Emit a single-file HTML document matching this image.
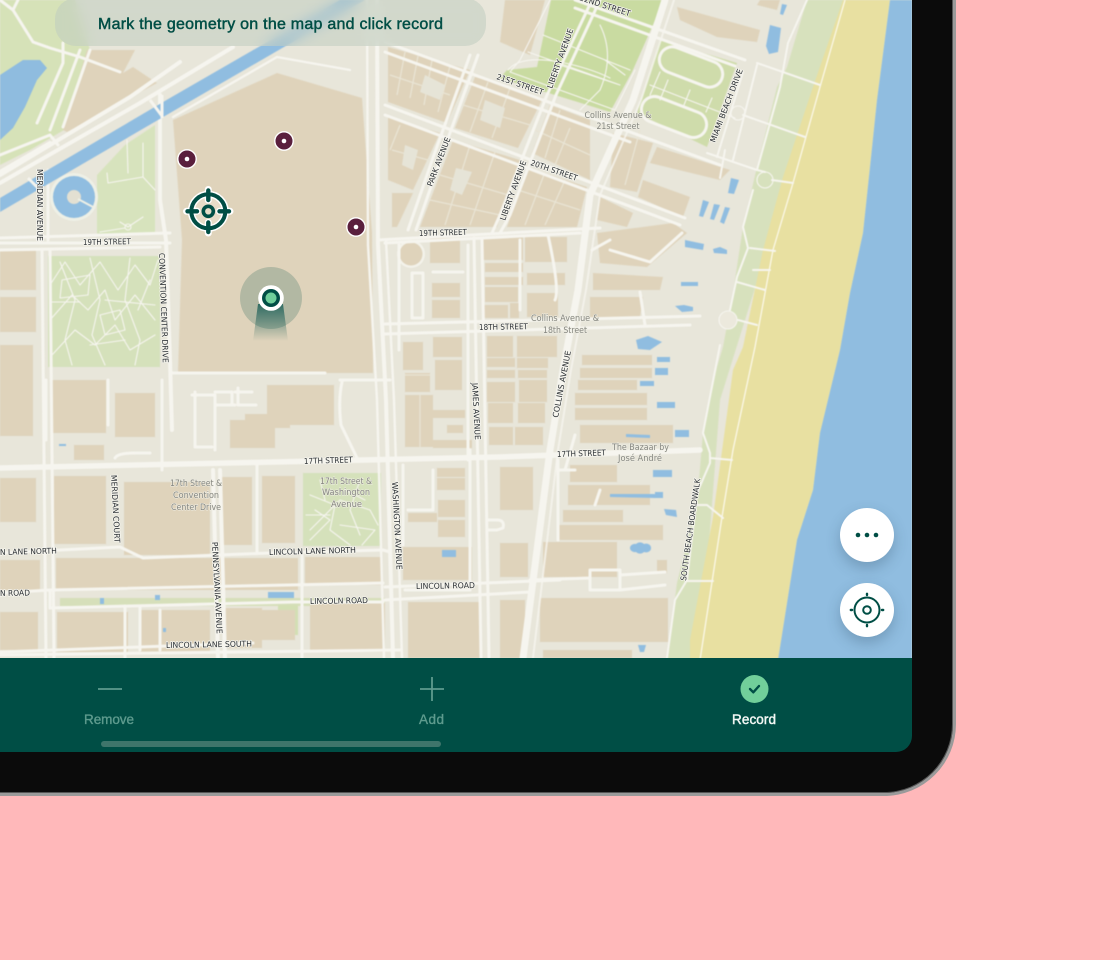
<!DOCTYPE html>
<html lang="en"><head><meta charset="utf-8"><title>Map</title>
<style>
html,body{margin:0;padding:0;width:1120px;height:960px;overflow:hidden;background:#ffb8ba;font-family:"Liberation Sans",sans-serif}
#dev{position:absolute;left:-200px;top:-200px;width:1151px;height:991px;background:#0b0b0b;border:2px solid #9a9a9a;border-right-width:3px;border-bottom-width:3px;border-radius:72px;box-shadow:inset 0 0 0 1px #555}
#scr{position:absolute;left:-100px;top:-100px;width:1012px;height:852px;border-radius:16px;overflow:hidden;background:#004e45}
#map{position:absolute;left:100px;top:100px}
#ban{position:absolute;left:155px;top:98px;width:431px;height:48px;border-radius:21px;background:rgba(192,204,192,.55);backdrop-filter:blur(6px)}
.fab{position:absolute;left:940px;width:54px;height:54px;border-radius:50%;background:#fff;box-shadow:0 6px 14px rgba(40,70,90,.28)}
.t{font-family:"DejaVu Sans",sans-serif;font-size:8px;fill:#2a2f33;stroke:#f6f5ee;stroke-width:1.6px;paint-order:stroke;stroke-linejoin:round}
.g{font-family:"DejaVu Sans",sans-serif;font-size:8.5px;fill:#85867f;stroke:#efeee5;stroke-width:1px;paint-order:stroke}
</style></head><body>
<div id="dev"></div>
<div id="scr">
<svg id="map" width="912" height="658" viewBox="0 0 912 658" xmlns="http://www.w3.org/2000/svg">
<rect width="912" height="658" fill="#e8e6da"/>
<g style="filter:blur(.4px)">
<!-- beach -->
<path d="M807 0L787 67L777 87L757 167L743 227L733 293L723 347L717 367L703 433L697 503L677 583L667 660H700L720 400L845 0Z" fill="#d7e1bd"/>
<path d="M843 0L813 87L783 177L763 250L743 347L733 370L713 517L690 640V660H778L797 540L813 490L820 433L840 350L850 293L863 233L870 167L877 100L890 0Z" fill="#e8e0a1"/>
<path d="M890 0L877 100L870 167L863 233L850 293L840 350L820 433L813 490L797 540L778 660H912V0Z" fill="#90bde0"/>
<path d="M845 0L820 87L793 183L773 250L755 347L733 450L722 517L700 660" fill="none" stroke="#fbf8e8" stroke-width="1.3"/>
<!-- parks -->
<path d="M0 0H75L90 50L64 130L30 150L0 165Z" fill="#d6e2b8"/>
<path d="M0 75L23 60L40 60L47 68L37 80L25 107L13 128L0 140Z" fill="#8fbcdf"/>
<path d="M97 235V175L125 145L155 125V235Z" fill="#d7e3bd"/>
<circle cx="74" cy="197" r="24" fill="#eef0e6"/><circle cx="74" cy="197" r="21" fill="#90bde0"/><circle cx="74" cy="197" r="7" fill="#e3e0d2"/>
<path d="M78 199L93 207" stroke="#eef0e6" stroke-width="2"/>
<rect x="48" y="256" width="112" height="111" fill="#d5e1bb"/>
<rect x="303" y="473" width="78" height="73" fill="#d5e1bb"/>
<path d="M551 0L537 67L507 70L500 78L610 112L632 72L664 0Z" fill="#c9dba1"/>
<path d="M660 40L737 63L707 147L637 113Z" fill="#cfdcab"/>
<path d="M60 598H385V606H60Z" fill="#d6dfba"/><path d="M278 605H298V635H278Z" fill="#d3dfb4"/>
<!-- buildings -->
<path fill="#dfd3bb" d="M173 120L277 73L362 98L372 233L373 373L178 373L182 240Z
M63 130L87 50H135L123 73L133 67L157 83L67 132Z
M388 47L470 70L447 123L388 102Z M475 77L543 98L518 148L455 128Z M550 105L590 120L590 180L532 153Z
M388 117L440 133L413 190L388 180Z M392 193H413L397 227H392Z M453 140L520 160L497 227H420Z M527 167L587 187L577 227H507Z
M505 0H545L530 55L500 42Z
M613 133L653 143L637 192L610 187Z M657 147L730 170L720 180L650 163Z M643 180L690 197L683 217L638 197Z M600 197L633 213L627 227L597 220Z
M597 233L673 223L687 233L647 267L600 263Z M593 273L663 277L660 290L593 290Z M590 297H643L640 317L590 320Z
M677 7L760 30L757 42L717 37L680 20Z M760 0H780L777 10L757 5Z
M0 250H36V290H0ZM0 297H36V332H0ZM0 345H33V436H0ZM0 478H36V522H0ZM0 560H40V590H0ZM0 612H38V650H0Z
M52 380H106V433H52Z M115 393H155V437H115Z M74 445H104V460H74Z M54 476H106V544H54Z M124 482H210V555H124Z M222 477H252V545H222Z M262 476H295V543H262Z
M56 558H298V590H56ZM305 557H382V585H305Z M57 612H128V652H57ZM140 610H210V652H140ZM225 608H262V648H225ZM262 610H295V640H262ZM310 603H385V652H310Z
M267 385H334V425H267Z M245 414H290V428H245Z M230 420H275V448H230Z
M430 238H460V263H430ZM432 283H460V297H432ZM432 300H460V318H432Z
M403 342H423V370H403ZM433 337H462V357H433ZM435 360H462V390H435ZM405 373H430V392H405ZM405 395H433V447H405ZM433 410H465V418H433ZM447 425H463V433H447ZM433 440H472V448H433Z
M483 237H523V260H483ZM525 237H567V262H525ZM485 263H523V272H485ZM485 277H523V285H485ZM527 273H565V285H527ZM485 287H518V302H485ZM484 305H508V318H484ZM510 303H519V318H510ZM527 293H558V317H527Z
M487 336H513V357H487ZM517 336H557V357H517ZM487 358H515V367H487ZM517 358H548V368H517ZM487 370H515V378H487ZM518 370H547V378H518ZM487 382H515V402H487ZM519 380H547V402H519ZM488 403H513V423H488ZM518 403H545V423H518ZM489 427H513V445H489ZM515 427H543V445H515Z
M582 355H652V365H582ZM580 368H652V378H580ZM578 380H637V390H578ZM575 393H647V405H575ZM575 408H647V420H575ZM580 425H673V443H580ZM570 465H617V482H570ZM568 485H650V505H568ZM563 510H623V522H563ZM557 525H663V540H557ZM543 542H617V577H543ZM657 560H667V573H657ZM540 598H668V642H540ZM543 650H632V658H543Z
M500 467H533V510H500ZM500 543H528V577H500ZM500 600H525V658H500Z
M437 468H465V477H437ZM437 478H465V490H437ZM438 500H465V517H438ZM408 513H437V522H408ZM438 520H465V537H438ZM403 547H472V580H403ZM408 602H480V658H408Z"/>
<circle cx="411" cy="254" r="14" fill="#f3f2ea"/><circle cx="411" cy="254" r="11.500" fill="#dfd3bb"/>
<!-- gaps in blocks -->
<g stroke="#e9e4d4" stroke-width="1.300" fill="none">
<path d="M405 52L397 95M418 56L410 98M432 60L424 105M390 75L450 95M450 66L438 112M488 82L470 132M510 88L492 138M463 105L530 125M560 110L545 158M535 130L590 155M570 128L555 165"/>
<path d="M392 150L428 160M400 125L390 150M470 145L445 225M495 152L470 225M440 175L508 195M430 200L500 215M545 172L525 225M565 180L545 225M518 190L580 210"/>
<path d="M640 130L625 185M405 375H430M420 395V447"/>
</g>
<path fill="#e6e4d7" d="M425 75L445 85L440 100L420 92Z M485 100L505 108L500 128L480 120Z M405 145L418 150L413 170L402 165Z M456 168L472 172L462 195L450 190Z"/>
<!-- pools -->
<path fill="#90bde0" d="M770 25L781 28L778 52L769 54L766 46ZM782 4L787 5L783 15L780 14ZM731 178L739 180L734 194L728 193ZM703 200L709 202L703 217L699 216ZM714 204L720 205L714 220L710 219ZM725 207L730 208L724 224L720 222ZM685 240L704 244L703 250L685 247ZM713 249L720 247L727 250V254L714 253ZM681 282H698V286H681ZM675 306L684 305L693 307V311L682 312ZM636 340L648 336L662 342L650 350L638 349ZM657 357H670V362H657ZM655 368H668V375H655ZM640 381H654V386H640ZM657 402H675V408H657ZM626 434L650 435V438L626 437ZM675 430H689V437H675ZM653 470H672V477H653ZM610 494L655 494V498L610 497ZM655 492H663V498H655ZM664 509L676 510L677 517L666 515ZM638 645H646L644 652H640ZM442 550H456V557H442ZM268 592H294V598H268ZM59 444H66V446H59ZM100 598H104V604H100ZM155 595H160V600H155ZM163 628H166V632H163Z"/>
<path fill="#90bde0" d="M630 548a5 4 0 0 1 6-4a5 4 0 0 1 8 0a5 4 0 0 1 7 4a5 4 0 0 1-7 4a5 4 0 0 1-8 0a5 4 0 0 1-6-4Z"/>
<!-- roads -->
<g fill="none" stroke="#f6f5ef" stroke-linecap="round" stroke-linejoin="round">
<g stroke-width="3">
<path d="M13 10L33 42L50 48L80 57L120 72"/><path d="M0 0L13 10M18 0L13 10"/>
<path d="M63 43V63L37 123"/>
<path d="M80 50L50 130M90 50L63 127"/>
<path d="M0 155L50 135L58 145"/>
<path d="M40 170V240M48 170V240M42 250L46 658M50 250L54 658"/>
<path d="M0 238L170 233M0 250L160 247"/>
<path d="M46 380V440M172 373H325"/>
<path d="M162 380V470"/>
<path d="M192 395H215V450M215 392H232V405M238 388V405H256M235 392H252M215 405H235"/>
<path d="M195 392V447H212"/>
<path d="M340 380H390M342 382Q338 400 341 425L358 460"/>
<path d="M108 380V425"/>
<path d="M115 458Q118 453 135 453H150"/>
<path d="M257 465V552M302 555V658"/>
<path d="M0 553L120 547L143 558L270 553L383 550L390 552"/>
<path d="M0 593L50 590L383 583M50 608L293 602L383 602"/>
<path d="M0 652L253 643M0 655L400 650"/>
<path d="M385 587L560 580M385 600L530 592"/>
<path d="M50 590V608M125 606V658M160 610V650M140 606V650"/>
<path d="M378 240L600 228M385 243L580 233"/>
<path d="M385 324L700 316M385 334L690 325"/>
<path d="M474 238L481 658M482 238L489 658"/>
<path d="M385 42L720 165M385 52L630 142"/>
<path d="M385 105L685 218M385 115L680 225"/>
<path d="M575 0L745 60M575 8L735 66"/>
<path d="M592 0L547 95L500 215L492 233M600 0L556 95L510 215L500 233"/>
<path d="M470 55L434 155L408 230M478 55L442 155L416 230"/>
<path d="M399 245V350M468 245V460"/>
<path d="M433 272H463M412 273H423V318H412Z"/>
<path d="M403 465V545M433 470V510H408M470 450V590"/>
<path d="M408 510H432M405 590H470"/>
<path d="M487 520H497Q505 520 503 528L497 530H487"/>
<path d="M548 235Q560 290 555 300M592 250L610 240"/>
<path d="M520 240V310M575 435L565 470"/>
<path d="M560 470H575M558 460V540"/>
<path d="M530 580L590 578M590 570H620V590H590ZM620 575L665 572M620 590L665 585"/>
<path d="M640 292L645 325"/>
<path d="M595 505L600 490M610 250L650 262L682 233"/>
</g>
<g stroke-width="2">
<path d="M707 153L757 170L765 172M753 190L743 227L748 248L737 277L730 310M720 345L703 433L710 453L710 463L697 493L687 580L675 600L667 658"/>
<path d="M717 157L743 72M733 160L757 65M757 170L780 87L788 43L807 0"/>
<path d="M757 63L820 85M743 115L805 137M772 180L793 183M750 248L775 251M753 270L770 270M737 282L765 290M738 320L757 325M710 458L732 460M697 505H707L723 518M687 581H713"/>
<path d="M725 150L720 178"/>
</g>
<!-- thick -->
<g stroke-width="4">
<path d="M0 183L140 103L233 47M0 175L130 97L180 62"/>
<path d="M50 143L0 172"/>
<path d="M160 95V200L166 240L170 360L172 430"/>
<path d="M377 0L378 245L386 400L393 658"/>
<path d="M0 468L500 457L700 450" stroke-width="5.500"/>
<path d="M213 470L218 658M220 470L225 658"/>
<path d="M0 243H170" stroke-width="3"/>
</g>
<g stroke-width="2.400">
<path d="M367 0L368 245L377 400L384 658"/>
<path d="M386 240L394 400L402 658"/>
<path d="M173 117L277 57L350 70"/>
</g>
<path d="M665 0L633 100L590 195L578 290L563 370L550 450L523 658" stroke-width="7"/>
<path d="M674 0L641 100L600 195L586 290L571 370L558 450L533 658" stroke-width="2" opacity=".8"/>
<!-- ovals -->
<g stroke-width="3" fill="none">
<rect x="658" y="54" width="66" height="26" rx="13" transform="rotate(21 691 67)"/>
<rect x="640" y="104" width="68" height="26" rx="13" transform="rotate(21 674 117)"/>
</g>
<g stroke-width="1.100">
<path d="M650 85L735 118M660 72L650 95M668 80L660 100M690 90L684 105M712 98L706 112"/>
<path d="M550 0L520 60L510 72L615 110L635 70M543 35L630 70M508 70Q520 55 560 62Q590 68 610 78M600 25Q615 55 600 90L580 110M528 52L620 85M560 65L620 85M605 60L625 75"/>
<circle cx="765" cy="180" r="8"/><circle cx="738" cy="113" r="7"/><circle cx="728" cy="320" r="9" fill="#ece9dd"/>
<path d="M50 285L65 262L80 285L100 262L118 290L135 265L150 285L158 260M50 320L72 295L88 310L105 290L115 320L135 295L155 320M52 355L75 330L95 345L115 325L130 350L155 335M60 262L75 300L65 340L72 365M90 258L100 300L92 335L105 365M130 258L125 300L140 340L135 365M52 302H80M105 300L155 305M90 345L125 340M150 280L138 310M62 280L90 275L88 295L60 298ZM100 315L120 310L125 330L105 335Z"/>
<path d="M310 495L335 505L330 530L350 545M310 530L340 500L370 510L378 525M360 480L350 510L360 535M315 510L330 520L310 540M345 490L365 500M320 480L325 500M306 515H330M340 525L375 530L362 545"/>
<path d="M107 173L108 183L143 177L155 190M127 140L128 173M143 143V177M120 222L128 227L143 217M100 232L125 228"/><circle cx="128" cy="227" r="3"/>
</g>
</g>
<!-- canal -->
<path d="M0 198L170 98L340 0H365L170 113L0 212Z" fill="#90bde0"/>
<path d="M150 100L162 116M162 95V118M28 178L40 190" stroke="#f6f5ef" stroke-width="3" fill="none"/>
</g>
<!-- labels -->
<g>
<text class="t" x="83" y="245" lengthAdjust="spacingAndGlyphs" textLength="48" transform="rotate(-1 83 245)">19TH STREET</text>
<text class="t" x="419" y="236" lengthAdjust="spacingAndGlyphs" textLength="48" transform="rotate(-1.5 419 236)">19TH STREET</text>
<text class="t" x="479" y="330" lengthAdjust="spacingAndGlyphs" textLength="49" transform="rotate(-1 479 330)">18TH STREET</text>
<text class="t" x="304" y="464" lengthAdjust="spacingAndGlyphs" textLength="49" transform="rotate(-2 304 464)">17TH STREET</text>
<text class="t" x="557" y="457" lengthAdjust="spacingAndGlyphs" textLength="49" transform="rotate(-2 557 457)">17TH STREET</text>
<text class="t" x="37" y="169" lengthAdjust="spacingAndGlyphs" textLength="72" transform="rotate(90 37 169)">MERIDIAN AVENUE</text>
<text class="t" x="159" y="253" lengthAdjust="spacingAndGlyphs" textLength="110" transform="rotate(88 159 253)">CONVENTION CENTER DRIVE</text>
<text class="t" x="111" y="475" lengthAdjust="spacingAndGlyphs" textLength="68" transform="rotate(87 111 475)">MERIDIAN COURT</text>
<text class="t" x="212" y="542" lengthAdjust="spacingAndGlyphs" textLength="92" transform="rotate(87 212 542)">PENNSYLVANIA AVENUE</text>
<text class="t" x="392" y="482" lengthAdjust="spacingAndGlyphs" textLength="88" transform="rotate(87 392 482)">WASHINGTON AVENUE</text>
<text class="t" x="472" y="383" lengthAdjust="spacingAndGlyphs" textLength="57" transform="rotate(87 472 383)">JAMES AVENUE</text>
<text class="t" x="558" y="418" lengthAdjust="spacingAndGlyphs" textLength="68" transform="rotate(-79 558 418)">COLLINS AVENUE</text>
<text class="t" x="432" y="187" lengthAdjust="spacingAndGlyphs" textLength="52" transform="rotate(-69 432 187)">PARK AVENUE</text>
<text class="t" x="552" y="89" lengthAdjust="spacingAndGlyphs" textLength="63" transform="rotate(-70 552 89)">LIBERTY AVENUE</text>
<text class="t" x="505" y="221" lengthAdjust="spacingAndGlyphs" textLength="63" transform="rotate(-70 505 221)">LIBERTY AVENUE</text>
<text class="t" x="579" y="0" lengthAdjust="spacingAndGlyphs" textLength="53" transform="rotate(18 579 0)">22ND STREET</text>
<text class="t" x="496" y="79" lengthAdjust="spacingAndGlyphs" textLength="49" transform="rotate(19 496 79)">21ST STREET</text>
<text class="t" x="530" y="165" lengthAdjust="spacingAndGlyphs" textLength="49" transform="rotate(19 530 165)">20TH STREET</text>
<text class="t" x="715" y="143" lengthAdjust="spacingAndGlyphs" textLength="78" transform="rotate(-69 715 143)">MIAMI BEACH DRIVE</text>
<text class="t" x="686" y="581" lengthAdjust="spacingAndGlyphs" textLength="103" transform="rotate(-82 686 581)">SOUTH BEACH BOARDWALK</text>
<text class="t" x="269" y="555" lengthAdjust="spacingAndGlyphs" textLength="87" transform="rotate(-1.5 269 555)">LINCOLN LANE NORTH</text>
<text class="t" x="0" y="555" lengthAdjust="spacingAndGlyphs" textLength="57" transform="rotate(-1.5 0 555)">N LANE NORTH</text>
<text class="t" x="416" y="589" lengthAdjust="spacingAndGlyphs" textLength="59" transform="rotate(-1 416 589)">LINCOLN ROAD</text>
<text class="t" x="310" y="604" lengthAdjust="spacingAndGlyphs" textLength="58" transform="rotate(-1 310 604)">LINCOLN ROAD</text>
<text class="t" x="0" y="596" lengthAdjust="spacingAndGlyphs" textLength="30" transform="rotate(-1 0 596)">N ROAD</text>
<text class="t" x="166" y="648" lengthAdjust="spacingAndGlyphs" textLength="86" transform="rotate(-1 166 648)">LINCOLN LANE SOUTH</text>
<text class="g" x="584.500" y="118" lengthAdjust="spacingAndGlyphs" textLength="67">Collins Avenue &amp;</text><text class="g" x="596.500" y="129" lengthAdjust="spacingAndGlyphs" textLength="43">21st Street</text>
<text class="g" x="531" y="321" lengthAdjust="spacingAndGlyphs" textLength="68">Collins Avenue &amp;</text><text class="g" x="543" y="333" lengthAdjust="spacingAndGlyphs" textLength="44">18th Street</text>
<text class="g" x="612" y="450" lengthAdjust="spacingAndGlyphs" textLength="57">The Bazaar by</text><text class="g" x="618" y="461" lengthAdjust="spacingAndGlyphs" textLength="44">José André</text>
<text class="g" x="170" y="486" lengthAdjust="spacingAndGlyphs" textLength="52">17th Street &amp;</text><text class="g" x="173" y="498" lengthAdjust="spacingAndGlyphs" textLength="46">Convention</text><text class="g" x="171" y="510" lengthAdjust="spacingAndGlyphs" textLength="50">Center Drive</text>
<text class="g" x="320" y="484" lengthAdjust="spacingAndGlyphs" textLength="52">17th Street &amp;</text><text class="g" x="322" y="495" lengthAdjust="spacingAndGlyphs" textLength="48">Washington</text><text class="g" x="331" y="507" lengthAdjust="spacingAndGlyphs" textLength="31">Avenue</text>
</g>
<!-- markers -->
<g fill="#5a1f3d" stroke="#fff" stroke-width="1.400">
<circle cx="187" cy="159" r="9.200"/><circle cx="284" cy="141" r="9.200"/><circle cx="356" cy="227" r="9.200"/>
</g>
<g fill="#fff"><circle cx="187" cy="159" r="2.300"/><circle cx="284" cy="141" r="2.300"/><circle cx="356" cy="227" r="2.300"/></g>
<!-- target -->
<g fill="none" stroke-linecap="round">
<circle cx="208.300" cy="211.300" r="15" fill="#e7dcc8" stroke="none"/>
<g stroke="#fff" stroke-width="7"><circle cx="208.300" cy="211.300" r="17"/><path d="M208.300 189.500V200M208.300 222.500V233M186.500 211.300H197M219.500 211.300H230"/></g>
<g stroke="#004e45"><circle cx="208.300" cy="211.300" r="17" stroke-width="4"/><circle cx="208.300" cy="211.300" r="5" stroke-width="3.600"/><path stroke-width="4.400" d="M208.300 190.500V200M208.300 222.500V232M187.500 211.300H197M219.500 211.300H229"/></g>
</g>
<!-- location -->
<defs><linearGradient id="c" x1="0" y1="0" x2="0" y2="1"><stop offset="0" stop-color="#00504a" stop-opacity=".72"/><stop offset="1" stop-color="#00504a" stop-opacity="0"/></linearGradient></defs>
<circle cx="271" cy="298" r="31" fill="#004e45" fill-opacity=".2"/>
<path d="M258 304H283L288 341H253Z" fill="url(#c)"/>
<circle cx="271" cy="298" r="12.800" fill="#fff"/><circle cx="271" cy="298" r="9" fill="#004e45"/><circle cx="271" cy="298" r="5.500" fill="#6fcf9b"/>
</svg>
<div id="ban"></div>
<svg style="position:absolute;left:100px;top:100px" width="600" height="50"><text x="98" y="29" font-family="'Liberation Sans',sans-serif" font-size="16" fill="#004e45" stroke="#004e45" stroke-width=".45" textLength="345">Mark the geometry on the map and click record</text></svg>
<div class="fab" style="top:607.500px"><svg width="54" height="54"><g fill="#004e45"><circle cx="18" cy="27" r="2.300"/><circle cx="27" cy="27" r="2.300"/><circle cx="36" cy="27" r="2.300"/></g></svg></div>
<div class="fab" style="top:683px"><svg width="54" height="54"><g fill="none" stroke="#004e45" stroke-width="2"><circle cx="27" cy="27" r="12.500"/><circle cx="27" cy="27" r="3.800"/><path stroke-linecap="round" stroke-width="2.400" d="M27 12V10.800M27 42V43.200M12 27H10.800M42 27H43.200"/></g></svg></div>
<!-- bottom bar -->
<svg style="position:absolute;left:100px;top:758px" width="912" height="94">
<g stroke="#5e9b8e" stroke-width="1.800" fill="none"><path d="M98 31H122M420 31H444M432 19V43"/></g>
<g font-family="'Liberation Sans',sans-serif" font-size="13.500" text-anchor="middle">
<text x="109" y="66" fill="#5e9b8e" stroke="#5e9b8e" stroke-width=".35" textLength="50">Remove</text>
<text x="431.500" y="66" fill="#5e9b8e" stroke="#5e9b8e" stroke-width=".35" textLength="25">Add</text>
<text x="754" y="66" fill="#f2f7f4" stroke="#f2f7f4" stroke-width=".45" textLength="44">Record</text>
</g>
<circle cx="754.500" cy="31" r="14" fill="#71cf9a"/>
<path d="M750 31L753.300 34.300L759 28" fill="none" stroke="#004e45" stroke-width="2.400" stroke-linecap="round" stroke-linejoin="round"/>
<rect x="101" y="83" width="340" height="6" rx="3" fill="#3f756b"/>
</svg>
</div>
</body></html>
